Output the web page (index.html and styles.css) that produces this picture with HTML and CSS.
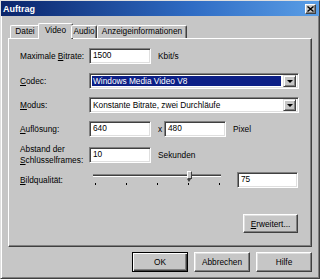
FILE: index.html
```html
<!DOCTYPE html>
<html lang="de">
<head>
  <meta charset="UTF-8">
  <title>Auftrag</title>
  <link rel="stylesheet" href="styles.css">
</head>
<body>

  <div class="window">
    <div class="titlebar">
      <span class="title">Auftrag</span>
      <span class="close-btn">
        <svg width="7" height="6" viewBox="0 0 7 6">
          <path d="M0.5 0.5 L6.5 5.5 M6.5 0.5 L0.5 5.5" stroke="#000" stroke-width="1.4"/>
        </svg>
      </span>
    </div>

    <div class="tabs">
      <div class="tab t-datei">Datei</div>
      <div class="tab t-video active">Video</div>
      <div class="tab t-audio">Audio</div>
      <div class="tab t-info">Anzeigeinformationen</div>
    </div>

    <div class="panel">
      <div class="row r-bitrate">
        <span class="lbl">Maximale <u>B</u>itrate:</span>
        <div class="field w-short">1500</div>
        <span class="unit">Kbit/s</span>
      </div>

      <div class="row r-codec">
        <span class="lbl"><u>C</u>odec:</span>
        <div class="field combo">
          <span class="combo-text selected">Windows Media Video V8</span>
          <span class="combo-btn"><span class="arrow"></span></span>
        </div>
      </div>

      <div class="row r-modus">
        <span class="lbl"><u>M</u>odus:</span>
        <div class="field combo">
          <span class="combo-text">Konstante Bitrate, zwei Durchläufe</span>
          <span class="combo-btn"><span class="arrow"></span></span>
        </div>
      </div>

      <div class="row r-size">
        <span class="lbl"><u>A</u>uflösung:</span>
        <div class="field w-short">640</div>
        <span class="times">x</span>
        <div class="field w-short">480</div>
        <span class="unit">Pixel</span>
      </div>

      <div class="row r-key">
        <span class="lbl two-line">Abstand der<br><u>S</u>chlüsselframes:</span>
        <div class="field w-short">10</div>
        <span class="unit">Sekunden</span>
      </div>

      <div class="row r-quality">
        <span class="lbl"><u>B</u>ildqualität:</span>
        <div class="slider">
          <div class="track"></div>
          <div class="thumb"></div>
          <div class="ticks">
            <span></span><span></span><span></span><span></span><span></span>
          </div>
        </div>
        <div class="field w-quality">75</div>
      </div>

      <div class="panel-foot">
        <div class="btn btn-more"><u>E</u>rweitert...</div>
      </div>
    </div>

    <div class="buttons">
      <div class="btn btn-main default">OK</div>
      <div class="btn btn-main">Abbrechen</div>
      <div class="btn btn-main">Hilfe</div>
    </div>
  </div>

</body>
</html>
```

FILE: styles.css
```css
* {
    box-sizing: border-box;
}

body {
    margin: 0;
    padding: 0;
    font-family: 'Liberation Sans', Arial, sans-serif;
    font-size: 8.3px;
    color: #000;
    background: #c6c6c6;
}

u {
    text-decoration: underline;
    text-underline-offset: 1px;
}

.window {
    width: 320px;
    height: 279px;
    background-color: #c6c6c6;
    border: 1px solid;
    border-color: #dfdfdf #404040 #404040 #dfdfdf;
    box-shadow: inset 1px 1px 0 #fff, inset -1px -1px 0 #808080;
    overflow: hidden;
}

.titlebar {
    height: 15px;
    display: flex;
    align-items: center;
    justify-content: space-between;
    padding: 0 3px 0 2px;
    background: linear-gradient(to right, #0a246a, #2f6cc4 60%, #5a9ee6);
}

.title {
    color: #fff;
    font-weight: bold;
    font-size: 9px;
}

.close-btn {
    width: 11px;
    height: 10px;
    display: flex;
    align-items: center;
    justify-content: center;
    background-color: #c6c6c6;
    border: 1px solid;
    border-color: #fff #404040 #404040 #fff;
    box-shadow: inset -1px -1px 0 #808080;
}

/* tab strip */
.tabs {
    position: relative;
    z-index: 1;
    display: flex;
    align-items: flex-end;
    height: 15px;
    margin: 7px 0 0 9px;
}

.tab {
    height: 13px;
    line-height: 11px;
    text-align: center;
    background-color: #c6c6c6;
    border: 1px solid;
    border-bottom: none;
    border-color: #fff #404040 #404040 #fff;
    box-shadow: inset -1px 0 0 #808080;
    border-radius: 2px 2px 0 0;
}

.tab.active {
    height: 16px;
    line-height: 13px;
    margin: 0 -2px -1px;
    padding: 0 2px;
}

.t-datei { width: 30px; }
.t-video { width: 31px; }
.t-audio { width: 26px; }
.t-info { width: 90px; }

.t-video.active { width: 35px; }

.panel {
    width: 304px;
    height: 209px;
    margin-left: 7px;
    padding: 9px 12px 0 11px;
    border: 1px solid;
    border-color: #fff #404040 #404040 #fff;
    box-shadow: inset -1px -1px 0 #808080;
}

.row {
    display: flex;
    align-items: center;
    height: 16px;
}

.r-codec { margin-top: 9px; }
.r-modus { margin-top: 8px; }
.r-size { margin-top: 8px; }
.r-key { margin-top: 10px; }
.r-quality { margin-top: 9px; }

.lbl {
    width: 69px;
    flex-shrink: 0;
    white-space: nowrap;
}

.lbl.two-line {
    line-height: 11px;
}

.field {
    height: 16px;
    line-height: 13px;
    padding: 0 3px;
    background-color: #fff;
    border: 1px solid;
    border-color: #808080 #fff #fff #808080;
    box-shadow: inset 1px 1px 0 #404040, inset -1px -1px 0 #dfdfdf;
    white-space: nowrap;
}

.w-short { width: 62px; }

.w-quality {
    width: 61px;
    margin-left: auto;
    margin-right: 1px;
}

.unit {
    margin-left: 7px;
}

.times {
    margin: 0 2px 0 7px;
    width: 4px;
}

.combo {
    flex: 1;
    display: flex;
    align-items: center;
    padding: 2px;
    height: 16px;
}

.combo-text {
    flex: 1;
    height: 10px;
    line-height: 10px;
    padding-left: 1px;
}

.combo-text.selected {
    background-color: #0c1f86;
    color: #fff;
    margin-right: 2px;
}

.combo-btn {
    width: 13px;
    height: 12px;
    display: flex;
    align-items: center;
    justify-content: center;
    background-color: #c6c6c6;
    border: 1px solid;
    border-color: #dfdfdf #404040 #404040 #dfdfdf;
    box-shadow: inset 1px 1px 0 #fff, inset -1px -1px 0 #808080;
}

.arrow {
    width: 0;
    height: 0;
    border-left: 3px solid transparent;
    border-right: 3px solid transparent;
    border-top: 3px solid #000;
    margin-top: 1px;
}

/* quality slider */
.slider {
    position: relative;
    width: 133px;
    height: 16px;
    margin-left: 4px;
}

.track {
    margin-top: 2px;
    width: 128px;
    height: 3px;
    border-top: 1px solid #808080;
    border-bottom: 1px solid #fff;
    background-color: #404040;
    background-clip: padding-box;
}

.thumb {
    position: absolute;
    left: 94px;
    top: -1px;
    width: 5px;
    height: 8px;
    background-color: #c6c6c6;
    border: 1px solid;
    border-color: #fff #404040 #404040 #fff;
}

.thumb::after {
    content: "";
    position: absolute;
    left: -1px;
    top: 7px;
    border-left: 2.5px solid transparent;
    border-right: 2.5px solid transparent;
    border-top: 3px solid #404040;
}

.ticks {
    display: flex;
    justify-content: space-between;
    width: 125px;
    margin: 6px 0 0 2px;
}

.ticks span {
    width: 1px;
    height: 2px;
    background-color: #000;
}

.panel-foot {
    display: flex;
    justify-content: flex-end;
    margin-top: 26px;
}

.btn {
    height: 19px;
    display: flex;
    align-items: center;
    justify-content: center;
    background-color: #c6c6c6;
    border: 1px solid;
    border-color: #fff #404040 #404040 #fff;
    box-shadow: inset -1px -1px 0 #808080, inset 1px 1px 0 #dfdfdf;
}

.btn-more {
    width: 55px;
    margin-right: 1px;
}

.buttons {
    display: flex;
    justify-content: flex-end;
    gap: 6px;
    margin: 5px 7px 0 0;
}

.btn-main {
    width: 56px;
    height: 20px;
}

.btn-main.default {
    border-color: #000;
    box-shadow: inset 1px 1px 0 #fff, inset -1px -1px 0 #404040, inset -2px -2px 0 #808080;
}
```
